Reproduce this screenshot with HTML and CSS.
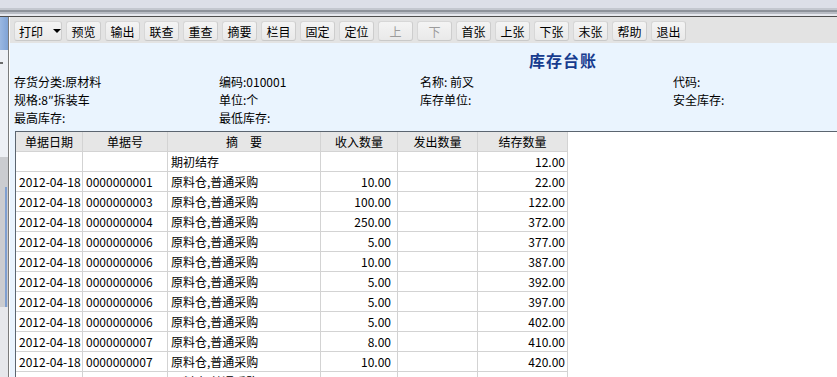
FILE: index.html
```html
<!DOCTYPE html>
<html>
<head>
<meta charset="utf-8">
<title>库存台账</title>
<link rel="stylesheet" href="styles.css">
</head>
<body>
<div class="topbar"></div>
<div class="desk">
    <aside class="side">
        <div class="side-top"></div>
        <div class="side-light"><i></i></div>
        <div class="side-gray"><b></b></div>
        <div class="side-end"></div>
    </aside>
    <div class="frame">
        <div class="toolbar">
            <button class="menu">打印<span class="caret"></span></button>
            <button>预览</button>
            <button>输出</button>
            <button>联查</button>
            <button>重查</button>
            <button>摘要</button>
            <button>栏目</button>
            <button>固定</button>
            <button>定位</button>
            <button disabled>上</button>
            <button disabled>下</button>
            <button>首张</button>
            <button>上张</button>
            <button>下张</button>
            <button>末张</button>
            <button>帮助</button>
            <button>退出</button>
        </div>
        <div class="head">
            <h1>库存台账</h1>
            <div class="info">
                <span>存货分类:原材料</span>
                <span>编码:010001</span>
                <span>名称: 前叉</span>
                <span>代码:</span>
                <span>规格:8″拆装车</span>
                <span>单位:个</span>
                <span>库存单位:</span>
                <span>安全库存:</span>
                <span>最高库存:</span>
                <span>最低库存:</span>
            </div>
        </div>
        <div class="grid">
            <div class="sheet">
                <table>
                    <colgroup>
                        <col class="c-date">
                        <col class="c-no">
                        <col class="c-memo">
                        <col class="c-in">
                        <col class="c-out">
                        <col class="c-bal">
                    </colgroup>
                    <thead>
                        <tr><th>单据日期</th><th>单据号</th><th>摘　要</th><th>收入数量</th><th>发出数量</th><th>结存数量</th></tr>
                    </thead>
                    <tbody>
                        <tr><td></td><td></td><td>期初结存</td><td class="in"></td><td></td><td class="bal">12.00</td></tr>
                        <tr><td>2012-04-18</td><td>0000000001</td><td>原料仓,普通采购</td><td class="in">10.00</td><td></td><td class="bal">22.00</td></tr>
                        <tr><td>2012-04-18</td><td>0000000003</td><td>原料仓,普通采购</td><td class="in">100.00</td><td></td><td class="bal">122.00</td></tr>
                        <tr><td>2012-04-18</td><td>0000000004</td><td>原料仓,普通采购</td><td class="in">250.00</td><td></td><td class="bal">372.00</td></tr>
                        <tr><td>2012-04-18</td><td>0000000006</td><td>原料仓,普通采购</td><td class="in">5.00</td><td></td><td class="bal">377.00</td></tr>
                        <tr><td>2012-04-18</td><td>0000000006</td><td>原料仓,普通采购</td><td class="in">10.00</td><td></td><td class="bal">387.00</td></tr>
                        <tr><td>2012-04-18</td><td>0000000006</td><td>原料仓,普通采购</td><td class="in">5.00</td><td></td><td class="bal">392.00</td></tr>
                        <tr><td>2012-04-18</td><td>0000000006</td><td>原料仓,普通采购</td><td class="in">5.00</td><td></td><td class="bal">397.00</td></tr>
                        <tr><td>2012-04-18</td><td>0000000006</td><td>原料仓,普通采购</td><td class="in">5.00</td><td></td><td class="bal">402.00</td></tr>
                        <tr><td>2012-04-18</td><td>0000000007</td><td>原料仓,普通采购</td><td class="in">8.00</td><td></td><td class="bal">410.00</td></tr>
                        <tr><td>2012-04-18</td><td>0000000007</td><td>原料仓,普通采购</td><td class="in">10.00</td><td></td><td class="bal">420.00</td></tr>
                        <tr><td>2012-04-18</td><td>0000000008</td><td>原料仓,普通采购</td><td class="in">10.00</td><td></td><td class="bal">430.00</td></tr>
                    </tbody>
                </table>
            </div>
        </div>
    </div>
</div>
</body>
</html>
```
FILE: styles.css
```css
body {
    margin: 0;
    width: 837px;
    height: 377px;
    overflow: hidden;
    font-family: "Noto Sans CJK SC", sans-serif;
    font-size: 12px;
    color: #000;
    background: #fff;
}

.topbar {
    height: 17px;
    box-sizing: border-box;
    background: linear-gradient(#dcdfe8 0, #dcdfe8 8px, #c3c7cf 8px, #c3c7cf 10px, #8e939b 10px, #8e939b 12px, #b9bdc5 12px, #b9bdc5 14px, #e7e9ef 14px, #e7e9ef 16px);
    border-bottom: 1px solid #4e4e4e;
}

.desk {
    display: flex;
    height: 360px;
}

.side {
    width: 8px;
    display: flex;
    flex-direction: column;
    background: #e7e8ec;
}

.side-top {
    height: 33px;
    background: linear-gradient(90deg, #9ab8e2, #7fa3d6);
}

.side-light {
    height: 107px;
    background: #eef0f5;
    position: relative;
}

.side-light i {
    position: absolute;
    left: 0;
    top: 12px;
    width: 3px;
    height: 2px;
    background: #6b6b6b;
}

.side-gray {
    height: 150px;
    background: #cbccd0;
    position: relative;
}

.side-gray b {
    position: absolute;
    right: 1px;
    top: 30px;
    width: 2px;
    height: 120px;
    background: #7f9fd0;
}

.side-end {
    flex: 1;
}

.frame {
    flex: 1;
    display: flex;
    flex-direction: column;
    border-left: 1px solid #7b7b7b;
    padding-left: 1px;
    background: #fff;
}

.toolbar {
    height: 26px;
    box-sizing: border-box;
    background: #e3e3e3;
    padding: 4px 0 0 4px;
    display: flex;
    gap: 4px;
}

button {
    flex: none;
    width: 35px;
    height: 20px;
    padding: 0;
    font-family: inherit;
    font-size: 12px;
    color: #000;
    white-space: nowrap;
    background: linear-gradient(#f4f4f4, #e9e9e9);
    border: 1px solid #d7d7d7;
    border-right-color: #cdcdcd;
    border-bottom-color: #c9c9c9;
    border-radius: 3px;
    line-height: 17px;
}

button:disabled {
    color: #9c9c9c;
}

.menu {
    width: 48px;
    padding-left: 4px;
    display: flex;
    align-items: center;
}

.caret {
    flex: none;
    margin-left: 10px;
    border-left: 4px solid transparent;
    border-right: 4px solid transparent;
    border-top: 4px solid #000;
}

.head {
    height: 88px;
    box-sizing: border-box;
    background: #eaf4fe;
    padding-top: 6px;
}

h1 {
    margin: 0;
    padding-left: 519px;
    font-size: 16px;
    line-height: 22px;
    letter-spacing: 1px;
    color: #163b8e;
}

.info {
    margin-top: 2px;
    padding-left: 4px;
    display: grid;
    grid-template-columns: 205px 201px 253px auto;
    grid-auto-rows: 18px;
    line-height: 18px;
}

.grid {
    flex: 1;
    background: #eaf4fe;
    padding-left: 5px;
    display: flex;
    min-height: 0;
}

.sheet {
    flex: 1;
    background: #fff;
    border-top: 1px solid #5b6570;
    border-left: 1px solid #5b6570;
    overflow: hidden;
}

table {
    border-spacing: 0;
    table-layout: fixed;
    width: 552px;
}

.c-date { width: 67px; }
.c-no { width: 85px; }
.c-memo { width: 153px; }
.c-in { width: 77px; }
.c-out { width: 80px; }
.c-bal { width: 90px; }

th, td {
    box-sizing: border-box;
    height: 20px;
    padding: 0 3px;
    border-right: 1px solid #d3d3d3;
    border-bottom: 1px solid #d3d3d3;
    line-height: 19px;
    white-space: nowrap;
    overflow: hidden;
}

th {
    background: #e6e6e6;
    font-weight: normal;
    text-align: center;
}

td {
    text-align: left;
}

td.in {
    text-align: right;
    padding-right: 6px;
}

td.bal {
    text-align: right;
    padding-right: 2px;
}
```
